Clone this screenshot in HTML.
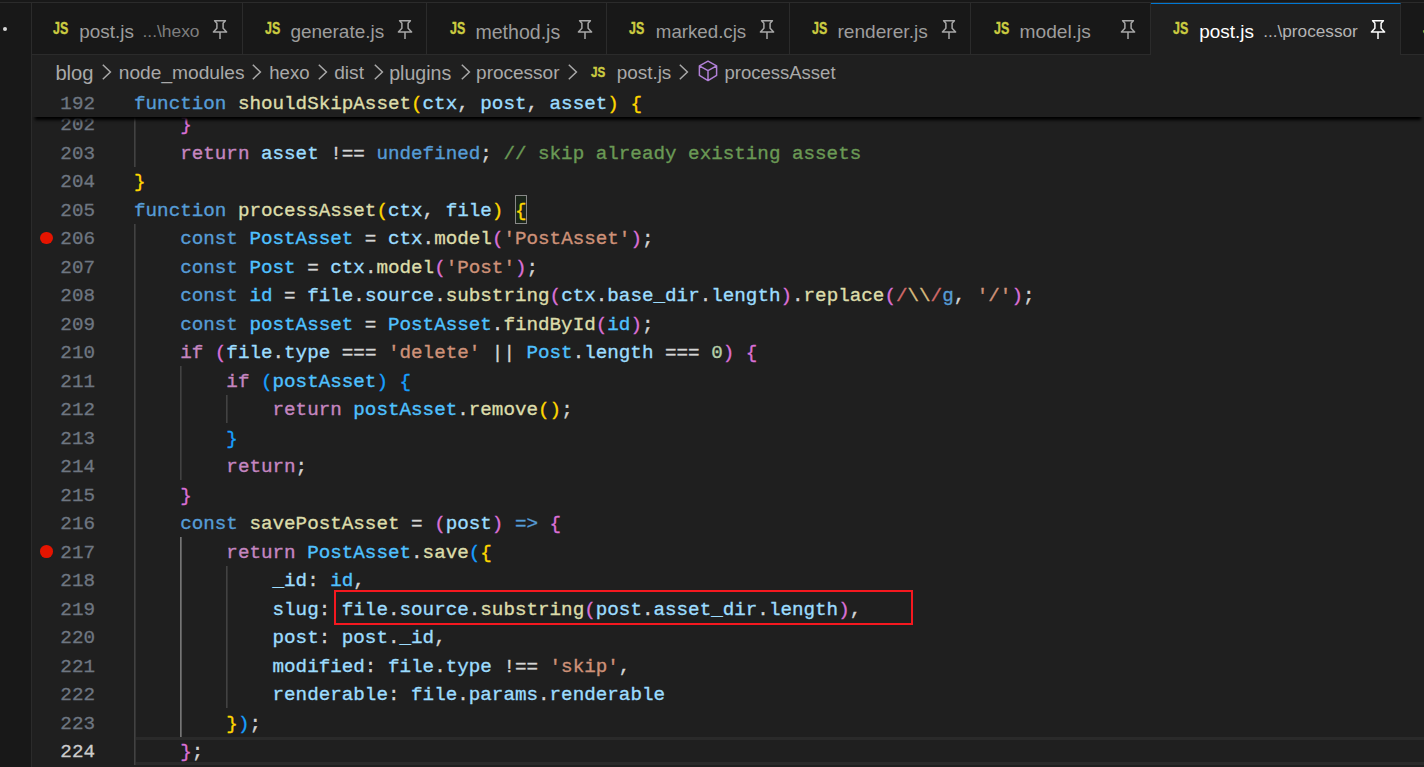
<!DOCTYPE html>
<html lang="en">
<head>
<meta charset="utf-8">
<title>post.js - processor</title>
<style>
*{box-sizing:border-box;margin:0;padding:0}
html,body{width:1424px;height:767px;overflow:hidden;background:#1f1f1f}
body{position:relative;font-family:"Liberation Sans",sans-serif;color:#cccccc}
.abs{position:absolute}
#side{position:absolute;left:0;top:0;width:32px;height:767px;background:#181818;border-right:1px solid #2b2b2b}
#topstrip{position:absolute;left:0;top:0;width:1424px;height:3px;background:#181818;border-bottom:1px solid #2b2b2b}
#dot{position:absolute;left:3px;top:27px;width:4px;height:4px;border-radius:50%;background:#d7d7d7}
#tabs{position:absolute;left:32px;top:3px;width:1392px;height:52px;background:#181818;border-bottom:1px solid #2b2b2b}
.tab{position:absolute;top:0;height:52px;border-right:1px solid #2b2b2b;border-bottom:1px solid #2b2b2b;background:#181818;color:#9d9d9d;font-size:19px;white-space:nowrap}
.tab.active{background:#1f1f1f;color:#ffffff;border-top:1px solid #0078d4;border-bottom:none}
.tab span{position:absolute;white-space:nowrap;line-height:24px}
.js{font-weight:bold;font-size:16px;color:#cbcb41;transform:scaleX(0.777);transform-origin:0 50%;display:inline-block;-webkit-text-stroke:0.4px}
.tab .nm{}
.tab .ds{color:#7f7f7f}
.tab.active .ds{color:#b4b4b4}
.tab svg{position:absolute}
#crumbs{position:absolute;left:32px;top:55px;width:1392px;height:33px;background:#1f1f1f;color:#a9a9a9;font-size:19px;white-space:nowrap}
#crumbs span{position:absolute;top:5.5px;line-height:24px;white-space:nowrap}
#crumbs svg{position:absolute}
#sticky{position:absolute;left:32px;top:88px;width:1392px;height:29px;background:#1f1f1f;box-shadow:0 6px 3px -3px #000000;z-index:5}
.mono,.cl,.ln{font-family:"Liberation Mono","DejaVu Sans Mono",monospace;font-size:19.24px;line-height:28.5px;white-space:pre;height:28.5px}
.cl{position:absolute;left:134px;color:#d4d4d4;-webkit-text-stroke:0.35px}
.ln{position:absolute;left:32px;width:63px;text-align:right;color:#6e7681;-webkit-text-stroke:0.3px}
.ln.act{color:#cccccc}
.k{color:#569cd6}.f{color:#dcdcaa}.v{color:#9cdcfe}.c{color:#4fc1ff}.ctl{color:#c586c0}.s{color:#ce9178}
.n{color:#b5cea8}.cm{color:#6a9955}.p{color:#d4d4d4}.b1,.b1m{color:#ffd700}.b2{color:#da70d6}.b3{color:#179fff}.r{color:#d16969}.esc{color:#d7ba7d}
.bm{position:absolute;left:515px;top:195px;width:12px;height:29px;border:1px solid #888888;background:rgba(0,100,0,0.1)}
.ig{position:absolute;width:2px;background:linear-gradient(to right,#424242 50%,#343434 50%)}
.iga{background:linear-gradient(to right,#757575 50%,#5a5a5a 50%)}
.bp{position:absolute;width:13px;height:12.6px;border-radius:50%;background:#e51400}
#curline{position:absolute;left:136px;top:737px;width:1288px;height:28px;border-top:3px solid #2a2a2a;border-bottom:3px solid #2a2a2a}
#redbox{position:absolute;left:334px;top:590px;width:579px;height:35px;border:2px solid #f5181f}
</style>
</head>
<body>
<div id="side"></div>
<div id="topstrip"></div>
<div id="dot"></div>

<div id="tabs">
<div class="tab" style="left:0px;width:211px"><span class="js" style="left:21.0px;top:14.0px">JS</span><span class="nm" style="left:47.2px;top:16.7px;font-size:18.91px">post.js</span><span class="ds" style="left:110.5px;top:16.2px;font-size:17.40px">...\hexo</span><svg style="left:179.7px;top:17.4px" width="16" height="20" viewBox="0 0 16 20" fill="none" stroke="#a8a8a8" stroke-width="1.5" stroke-linejoin="round" stroke-linecap="butt"><path d="M2.6 .7h10.8L11.1 3.2v5.1l3.5 3.7H1.4l3.5-3.7V3.2z M8 12v7"/></svg></div>
<div class="tab" style="left:211px;width:184px"><span class="js" style="left:21.8px;top:14.0px">JS</span><span class="nm" style="left:47.4px;top:16.7px;font-size:18.97px">generate.js</span><svg style="left:153.6px;top:17.4px" width="16" height="20" viewBox="0 0 16 20" fill="none" stroke="#a8a8a8" stroke-width="1.5" stroke-linejoin="round" stroke-linecap="butt"><path d="M2.6 .7h10.8L11.1 3.2v5.1l3.5 3.7H1.4l3.5-3.7V3.2z M8 12v7"/></svg></div>
<div class="tab" style="left:395px;width:180px"><span class="js" style="left:22.5px;top:14.0px">JS</span><span class="nm" style="left:48.4px;top:16.7px;font-size:19.57px">method.js</span><svg style="left:150.0px;top:17.4px" width="16" height="20" viewBox="0 0 16 20" fill="none" stroke="#a8a8a8" stroke-width="1.5" stroke-linejoin="round" stroke-linecap="butt"><path d="M2.6 .7h10.8L11.1 3.2v5.1l3.5 3.7H1.4l3.5-3.7V3.2z M8 12v7"/></svg></div>
<div class="tab" style="left:575px;width:183px"><span class="js" style="left:22.4px;top:14.0px">JS</span><span class="nm" style="left:48.8px;top:16.7px;font-size:18.72px">marked.cjs</span><svg style="left:151.5px;top:17.4px" width="16" height="20" viewBox="0 0 16 20" fill="none" stroke="#a8a8a8" stroke-width="1.5" stroke-linejoin="round" stroke-linecap="butt"><path d="M2.6 .7h10.8L11.1 3.2v5.1l3.5 3.7H1.4l3.5-3.7V3.2z M8 12v7"/></svg></div>
<div class="tab" style="left:758px;width:181px"><span class="js" style="left:21.6px;top:14.0px">JS</span><span class="nm" style="left:47.5px;top:16.7px;font-size:19.11px">renderer.js</span><svg style="left:150.8px;top:17.4px" width="16" height="20" viewBox="0 0 16 20" fill="none" stroke="#a8a8a8" stroke-width="1.5" stroke-linejoin="round" stroke-linecap="butt"><path d="M2.6 .7h10.8L11.1 3.2v5.1l3.5 3.7H1.4l3.5-3.7V3.2z M8 12v7"/></svg></div>
<div class="tab" style="left:939px;width:180px"><span class="js" style="left:22.6px;top:14.0px">JS</span><span class="nm" style="left:48.5px;top:16.7px;font-size:19.18px">model.js</span><svg style="left:149.3px;top:17.4px" width="16" height="20" viewBox="0 0 16 20" fill="none" stroke="#a8a8a8" stroke-width="1.5" stroke-linejoin="round" stroke-linecap="butt"><path d="M2.6 .7h10.8L11.1 3.2v5.1l3.5 3.7H1.4l3.5-3.7V3.2z M8 12v7"/></svg></div>
<div class="tab active" style="left:1119px;width:250px"><span class="js" style="left:22.4px;top:13.0px">JS</span><span class="nm" style="left:48.3px;top:15.7px;font-size:18.91px">post.js</span><span class="ds" style="left:112.2px;top:15.2px;font-size:17.22px">...\processor</span><svg style="left:218.6px;top:16.4px" width="16" height="20" viewBox="0 0 16 20" fill="none" stroke="#ffffff" stroke-width="1.5" stroke-linejoin="round" stroke-linecap="butt"><path d="M2.6 .7h10.8L11.1 3.2v5.1l3.5 3.7H1.4l3.5-3.7V3.2z M8 12v7"/></svg></div>
<div class="tab" style="left:1369px;width:40px;border-right:none"><span class="js" style="left:21.5px;top:14px">JS</span></div>

</div>

<div id="crumbs">
<span style="left:23.4px;font-size:20.19px">blog</span><span style="left:86.8px;font-size:19.17px">node_modules</span><span style="left:237.2px;font-size:18.63px">hexo</span><span style="left:302.2px;font-size:19.15px">dist</span><span style="left:357.2px;font-size:19.60px">plugins</span><span style="left:444.1px;font-size:19.00px">processor</span><span style="left:584.8px;font-size:18.87px">post.js</span><span style="left:692.5px;font-size:18.51px">processAsset</span><svg style="left:69.8px;top:9px" width="10" height="16" viewBox="0 0 10 16" fill="none" stroke="#a9a9a9" stroke-width="1.5"><path d="M0.8 0.8l7.6 7.2-7.6 7.2"/></svg><svg style="left:220.0px;top:9px" width="10" height="16" viewBox="0 0 10 16" fill="none" stroke="#a9a9a9" stroke-width="1.5"><path d="M0.8 0.8l7.6 7.2-7.6 7.2"/></svg><svg style="left:285.8px;top:9px" width="10" height="16" viewBox="0 0 10 16" fill="none" stroke="#a9a9a9" stroke-width="1.5"><path d="M0.8 0.8l7.6 7.2-7.6 7.2"/></svg><svg style="left:341.8px;top:9px" width="10" height="16" viewBox="0 0 10 16" fill="none" stroke="#a9a9a9" stroke-width="1.5"><path d="M0.8 0.8l7.6 7.2-7.6 7.2"/></svg><svg style="left:428.5px;top:9px" width="10" height="16" viewBox="0 0 10 16" fill="none" stroke="#a9a9a9" stroke-width="1.5"><path d="M0.8 0.8l7.6 7.2-7.6 7.2"/></svg><svg style="left:536.2px;top:9px" width="10" height="16" viewBox="0 0 10 16" fill="none" stroke="#a9a9a9" stroke-width="1.5"><path d="M0.8 0.8l7.6 7.2-7.6 7.2"/></svg><svg style="left:647.4px;top:9px" width="10" height="16" viewBox="0 0 10 16" fill="none" stroke="#a9a9a9" stroke-width="1.5"><path d="M0.8 0.8l7.6 7.2-7.6 7.2"/></svg><span class="js" style="left:559px;top:4.5px;font-size:15px">JS</span><svg style="left:666.2px;top:4.5px" width="20" height="22" viewBox="0 0 20 22" fill="none" stroke="#b180d7" stroke-width="1.5" stroke-linejoin="round"><path d="M10 1.2l8.6 4.6v9.6L10 20.6l-8.6-5.2V5.8z M1.4 5.8L10 10.6l8.6-4.8 M10 10.6v10"/></svg>
</div>

<div id="code">
<div class="ig" style="left:134.0px;top:109.70px;height:57.00px"></div>
<div class="ig" style="left:134.0px;top:223.70px;height:541.50px"></div>
<div class="ig" style="left:180.0px;top:366.20px;height:114.00px"></div>
<div class="ig" style="left:226.0px;top:394.70px;height:28.50px"></div>
<div class="ig iga" style="left:180.0px;top:537.20px;height:199.50px"></div>
<div class="ig" style="left:226.0px;top:565.70px;height:142.50px"></div>

<div id="curline"></div>
<div class="bm"></div>
<div class="ln" style="top:111.25px">202</div>
<div class="cl" style="top:111.25px">    <span class="b2">}</span></div>
<div class="ln" style="top:139.75px">203</div>
<div class="cl" style="top:139.75px">    <span class="ctl">return</span> <span class="v">asset</span><span class="p"> !== </span><span class="k">undefined</span><span class="p">; </span><span class="cm">// skip already existing assets</span></div>
<div class="ln" style="top:168.25px">204</div>
<div class="cl" style="top:168.25px"><span class="b1">}</span></div>
<div class="ln" style="top:196.75px">205</div>
<div class="cl" style="top:196.75px"><span class="k">function</span> <span class="f">processAsset</span><span class="b1">(</span><span class="v">ctx</span><span class="p">, </span><span class="v">file</span><span class="b1">)</span> <span class="b1m">{</span></div>
<div class="ln" style="top:225.25px">206</div>
<div class="cl" style="top:225.25px">    <span class="k">const</span> <span class="c">PostAsset</span><span class="p"> = </span><span class="v">ctx</span><span class="p">.</span><span class="f">model</span><span class="b2">(</span><span class="s">'PostAsset'</span><span class="b2">)</span><span class="p">;</span></div>
<div class="ln" style="top:253.75px">207</div>
<div class="cl" style="top:253.75px">    <span class="k">const</span> <span class="c">Post</span><span class="p"> = </span><span class="v">ctx</span><span class="p">.</span><span class="f">model</span><span class="b2">(</span><span class="s">'Post'</span><span class="b2">)</span><span class="p">;</span></div>
<div class="ln" style="top:282.25px">208</div>
<div class="cl" style="top:282.25px">    <span class="k">const</span> <span class="c">id</span><span class="p"> = </span><span class="v">file</span><span class="p">.</span><span class="v">source</span><span class="p">.</span><span class="f">substring</span><span class="b2">(</span><span class="v">ctx</span><span class="p">.</span><span class="v">base_dir</span><span class="p">.</span><span class="v">length</span><span class="b2">)</span><span class="p">.</span><span class="f">replace</span><span class="b2">(</span><span class="r">/</span><span class="esc">\\</span><span class="r">/</span><span class="k">g</span><span class="p">, </span><span class="s">'/'</span><span class="b2">)</span><span class="p">;</span></div>
<div class="ln" style="top:310.75px">209</div>
<div class="cl" style="top:310.75px">    <span class="k">const</span> <span class="c">postAsset</span><span class="p"> = </span><span class="c">PostAsset</span><span class="p">.</span><span class="f">findById</span><span class="b2">(</span><span class="c">id</span><span class="b2">)</span><span class="p">;</span></div>
<div class="ln" style="top:339.25px">210</div>
<div class="cl" style="top:339.25px">    <span class="ctl">if</span> <span class="b2">(</span><span class="v">file</span><span class="p">.</span><span class="v">type</span><span class="p"> === </span><span class="s">'delete'</span><span class="p"> || </span><span class="c">Post</span><span class="p">.</span><span class="v">length</span><span class="p"> === </span><span class="n">0</span><span class="b2">)</span> <span class="b2">{</span></div>
<div class="ln" style="top:367.75px">211</div>
<div class="cl" style="top:367.75px">        <span class="ctl">if</span> <span class="b3">(</span><span class="c">postAsset</span><span class="b3">)</span> <span class="b3">{</span></div>
<div class="ln" style="top:396.25px">212</div>
<div class="cl" style="top:396.25px">            <span class="ctl">return</span> <span class="c">postAsset</span><span class="p">.</span><span class="f">remove</span><span class="b1">(</span><span class="b1">)</span><span class="p">;</span></div>
<div class="ln" style="top:424.75px">213</div>
<div class="cl" style="top:424.75px">        <span class="b3">}</span></div>
<div class="ln" style="top:453.25px">214</div>
<div class="cl" style="top:453.25px">        <span class="ctl">return</span><span class="p">;</span></div>
<div class="ln" style="top:481.75px">215</div>
<div class="cl" style="top:481.75px">    <span class="b2">}</span></div>
<div class="ln" style="top:510.25px">216</div>
<div class="cl" style="top:510.25px">    <span class="k">const</span> <span class="f">savePostAsset</span><span class="p"> = </span><span class="b2">(</span><span class="v">post</span><span class="b2">)</span> <span class="k">=&gt;</span> <span class="b2">{</span></div>
<div class="ln" style="top:538.75px">217</div>
<div class="cl" style="top:538.75px">        <span class="ctl">return</span> <span class="c">PostAsset</span><span class="p">.</span><span class="f">save</span><span class="b3">(</span><span class="b1">{</span></div>
<div class="ln" style="top:567.25px">218</div>
<div class="cl" style="top:567.25px">            <span class="v">_id</span><span class="p">: </span><span class="c">id</span><span class="p">,</span></div>
<div class="ln" style="top:595.75px">219</div>
<div class="cl" style="top:595.75px">            <span class="v">slug</span><span class="p">: </span><span class="v">file</span><span class="p">.</span><span class="v">source</span><span class="p">.</span><span class="f">substring</span><span class="b2">(</span><span class="v">post</span><span class="p">.</span><span class="v">asset_dir</span><span class="p">.</span><span class="v">length</span><span class="b2">)</span><span class="p">,</span></div>
<div class="ln" style="top:624.25px">220</div>
<div class="cl" style="top:624.25px">            <span class="v">post</span><span class="p">: </span><span class="v">post</span><span class="p">.</span><span class="v">_id</span><span class="p">,</span></div>
<div class="ln" style="top:652.75px">221</div>
<div class="cl" style="top:652.75px">            <span class="v">modified</span><span class="p">: </span><span class="v">file</span><span class="p">.</span><span class="v">type</span><span class="p"> !== </span><span class="s">'skip'</span><span class="p">,</span></div>
<div class="ln" style="top:681.25px">222</div>
<div class="cl" style="top:681.25px">            <span class="v">renderable</span><span class="p">: </span><span class="v">file</span><span class="p">.</span><span class="v">params</span><span class="p">.</span><span class="v">renderable</span></div>
<div class="ln" style="top:709.75px">223</div>
<div class="cl" style="top:709.75px">        <span class="b1">}</span><span class="b3">)</span><span class="p">;</span></div>
<div class="ln act" style="top:738.25px">224</div>
<div class="cl" style="top:738.25px">    <span class="b2">}</span><span class="p">;</span></div>

<div class="bp" style="left:40px;top:231.7px"></div>
<div class="bp" style="left:40px;top:545.2px"></div>
<div id="redbox"></div>
</div>

<div id="sticky">
<div class="ln" style="left:0;top:1.75px">192</div>
<div class="cl" style="left:102px;top:1.75px"><span class="k">function</span> <span class="f">shouldSkipAsset</span><span class="b1">(</span><span class="v">ctx</span><span class="p">, </span><span class="v">post</span><span class="p">, </span><span class="v">asset</span><span class="b1">)</span> <span class="b1">{</span></div>
</div>
</body>
</html>
